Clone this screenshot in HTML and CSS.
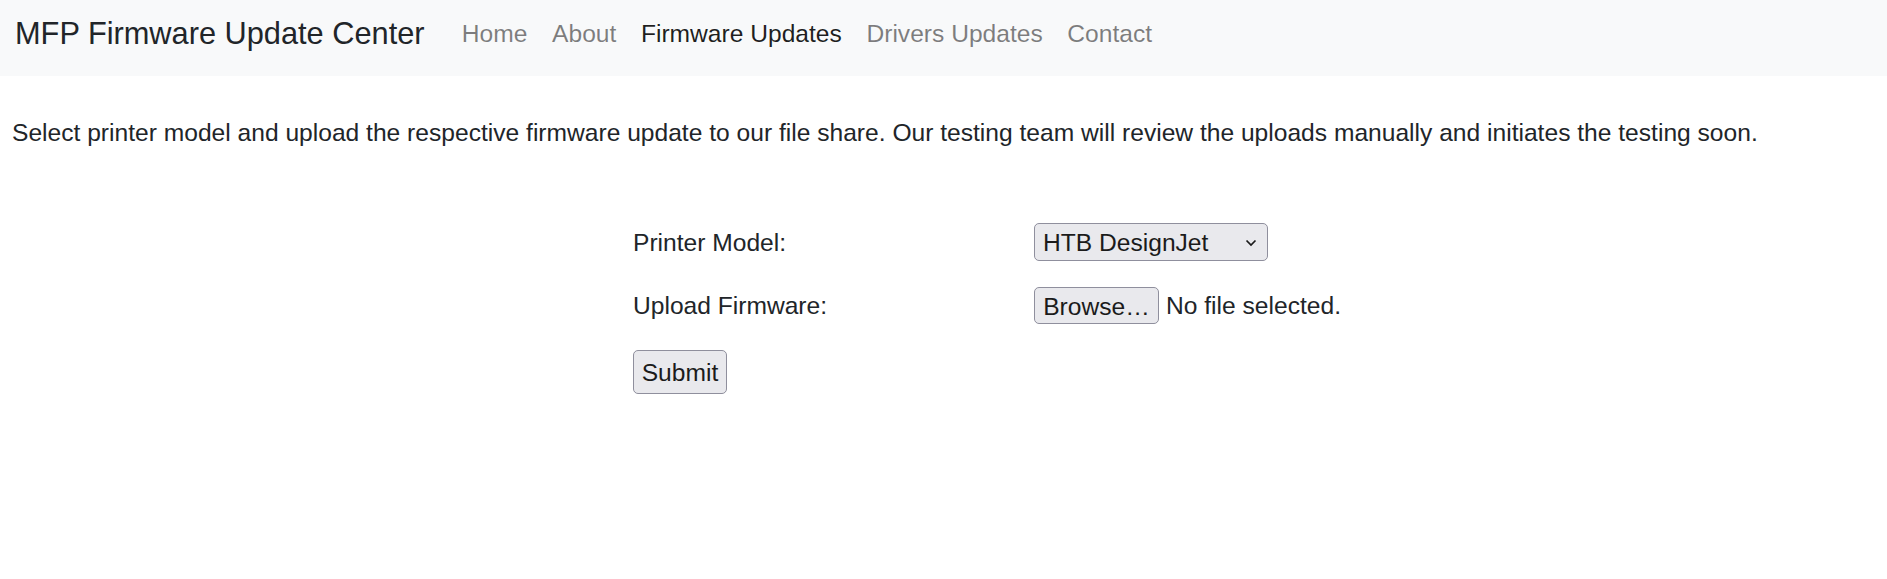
FILE: index.html
```html
<!DOCTYPE html>
<html lang="en">
<head>
<meta charset="utf-8">
<title>MFP Firmware Update Center</title>
<link rel="stylesheet" href="styles.css">
</head>
<body>
<nav class="navbar">
  <a class="brand" href="#">MFP Firmware Update Center</a>
  <ul class="nav">
    <li><a class="nav-link" href="#">Home</a></li>
    <li><a class="nav-link" href="#">About</a></li>
    <li><a class="nav-link active" href="#">Firmware Updates</a></li>
    <li><a class="nav-link" href="#">Drivers Updates</a></li>
    <li><a class="nav-link" href="#">Contact</a></li>
  </ul>
</nav>
<p class="intro">Select printer model and upload the respective firmware update to our file share. Our testing team will review the uploads manually and initiates the testing soon.</p>
<form class="upload-form">
  <div class="form-row">
    <label class="form-label" for="model">Printer Model:</label>
    <span class="select-wrap">
      <select id="model" class="select">
        <option>HTB DesignJet</option>
      </select>
      <svg class="chevron" width="12" height="8" viewBox="0 0 12 8"><path d="M1.5 1.5 L6 6 L10.5 1.5" fill="none" stroke="#1b1b1b" stroke-width="1.7"/></svg>
    </span>
  </div>
  <div class="form-row row-file">
    <label class="form-label">Upload Firmware:</label>
    <span class="file-input">
      <button type="button" class="btn browse">Browse…</button>
      <span class="file-name">No file selected.</span>
    </span>
  </div>
  <div class="submit-row">
    <button type="button" class="btn submit">Submit</button>
  </div>
</form>
</body>
</html>
```
FILE: styles.css
```css
* { box-sizing: border-box; }
html, body { margin: 0; padding: 0; }
body {
  font-family: "Liberation Sans", Arial, sans-serif;
  font-size: 24.6px;
  line-height: 1.5;
  color: #212529;
  background: #fff;
}
.navbar {
  background: #f8f9fa;
  height: 76px;
  display: flex;
  align-items: flex-start;
  padding: 11px 16px 0 15px;
}
.brand {
  font-size: 30.75px;
  line-height: 45px;
  color: #212529;
  text-decoration: none;
  margin-right: 25px;
}
.nav {
  display: flex;
  list-style: none;
  margin: 0;
  padding: 0;
}
.nav-link {
  display: block;
  line-height: 45px;
  padding: 0 12.3px;
  color: rgba(0, 0, 0, 0.5);
  text-decoration: none;
}
.nav-link.active { color: rgba(0, 0, 0, 0.88); }
.intro {
  margin: 39px 0 0 0;
  padding: 0 12px;
  line-height: 36px;
}
.upload-form {
  width: 621px;
  margin: 72px auto 0 auto;
  white-space: nowrap;
}
.form-row {
  display: grid;
  grid-template-columns: 401px max-content;
  align-items: center;
  height: 38px;
}
.row-file { margin-top: 25px; height: 37px; }
.form-label { line-height: 36px; padding-top: 2px; }
.select-wrap {
  position: relative;
  display: inline-block;
  width: 234px;
  height: 38px;
}
.select {
  appearance: none;
  -webkit-appearance: none;
  width: 234px;
  height: 38px;
  font-family: "Liberation Sans", Arial, sans-serif;
  font-size: 24.6px;
  color: #1b1b1b;
  background: #e9e9ed;
  border: 1px solid #8f8f9d;
  border-radius: 5px;
  padding: 1px 0 0 8px;
  margin: 0;
}
.chevron {
  position: absolute;
  right: 11px;
  top: 16px;
  pointer-events: none;
}
.file-input { display: flex; align-items: center; gap: 7px; }
.btn {
  font-family: "Liberation Sans", Arial, sans-serif;
  font-size: 24.6px;
  color: #1b1b1b;
  background: #e9e9ed;
  border: 1px solid #8f8f9d;
  border-radius: 5px;
  margin: 0;
}
.browse {
  height: 37px;
  width: 125px;
  padding: 1px 0 0 0;
  line-height: 35px;
}
.file-name { color: #212529; padding-top: 2px; }
.submit-row { margin-top: 27px; }
.submit {
  height: 44px;
  width: 94px;
  padding: 1px 0 0 0;
  line-height: 42px;
}
```
